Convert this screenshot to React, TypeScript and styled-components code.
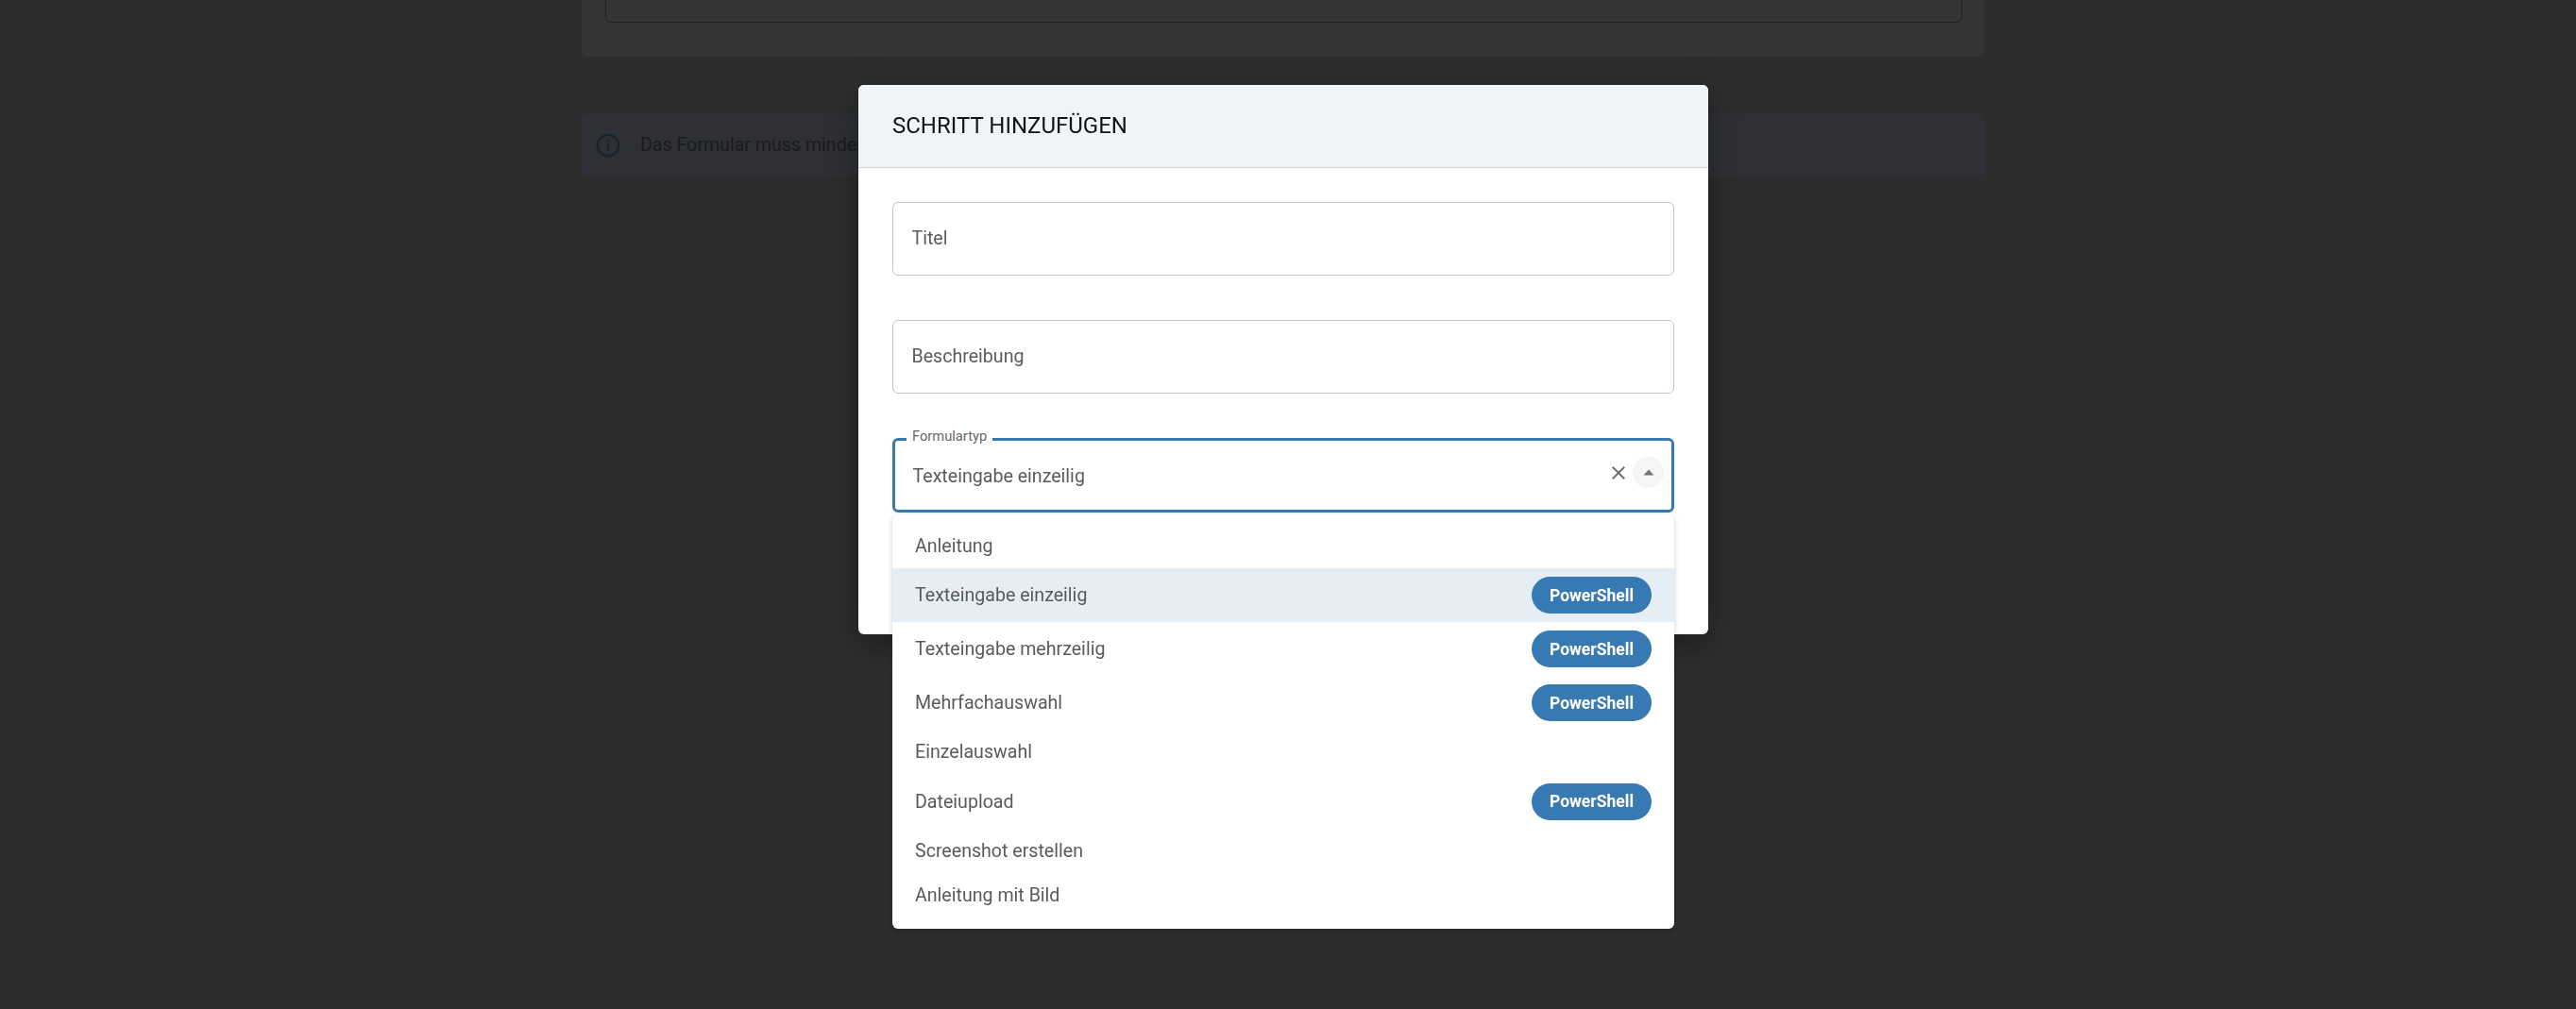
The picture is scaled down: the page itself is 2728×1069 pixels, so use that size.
import React from "react";
import styled, { createGlobalStyle } from "styled-components";

const Global = createGlobalStyle`
  html, body { margin: 0; padding: 0; height: 100%; background: #2d2d2d; overflow: hidden; }
  * { box-sizing: border-box; }
  body { font-family: Roboto, "Liberation Sans", sans-serif; }
`;

const Page = styled.div`
  width: 2728px;
  height: 1069px;
  padding: 0 626px 0 616px;
  background: #2d2d2d;
`;

const TopPanel = styled.div`
  height: 60px;
  padding: 0 24px 0 25px;
  background: #353535;
  border-radius: 0 0 6px 6px;
`;

const TopField = styled.div`
  height: 24px;
  border: 1.5px solid #232323;
  border-top: none;
  border-radius: 0 0 6px 6px;
`;

const Alert = styled.div`
  display: flex;
  align-items: center;
  gap: 19px;
  height: 66px;
  margin-top: 61px;
  padding: 0 13px;
  background: #2e3035;
  border-radius: 6px;
  color: #1a1b1d;
  font-size: 19.6px;
`;

const AlertText = styled.span`
  margin-top: -1px;
`;

const Backdrop = styled.div`
  position: fixed;
  inset: 0;
  display: flex;
  justify-content: center;
  align-items: flex-start;
  padding: 90px 10px 0 0;
`;

const Modal = styled.div`
  position: relative;
  width: 900px;
  height: 582px;
  background: #fff;
  border-radius: 6px;
  box-shadow: 0 14px 30px rgba(0, 0, 0, 0.22), 0 4px 40px rgba(0, 0, 0, 0.16);
`;

const Header = styled.header`
  display: flex;
  align-items: center;
  height: 88px;
  padding: 0 36px 2px;
  background: #eff4f8;
  border-bottom: 1.5px solid #cfd3d6;
  border-radius: 6px 6px 0 0;
  color: #10151a;
  font-size: 24px;
  font-weight: 400;
`;

const Body = styled.div`
  display: flex;
  flex-direction: column;
  gap: 47px;
  padding: 36px 36px 0;
`;

const Field = styled.div`
  display: flex;
  align-items: center;
  height: 78px;
  padding: 0 19.5px;
  padding-bottom: 2px;
  background: #fff;
  border: 1.5px solid #c4c4c4;
  border-radius: 6px;
  color: #5c5c5c;
  font-size: 19.6px;
`;

const SelectField = styled.div`
  position: relative;
  display: flex;
  align-items: center;
  height: 79px;
  padding: 1px 8px 0 18.5px;
  border: 3px solid #3778b3;
  border-radius: 6px;
  color: #5a5a5a;
  font-size: 19.6px;
`;

const FloatingLabel = styled.span`
  position: absolute;
  top: -15px;
  left: 12px;
  padding: 0 6px;
  height: 20px;
  line-height: 20px;
  background: #fff;
  color: #666;
  font-size: 14.7px;
`;

const SelectValue = styled.span`
  flex: 1;
`;

const ClearButton = styled.span`
  display: flex;
  justify-content: center;
  align-items: center;
  width: 26px;
  height: 26px;
  margin-top: -7px;
`;

const ArrowButton = styled.span`
  display: flex;
  justify-content: center;
  align-items: center;
  width: 33px;
  height: 33px;
  margin: -7px 0 0 2px;
  border-radius: 50%;
  background: #f5f5f5;
`;

const Dropdown = styled.ul`
  position: absolute;
  top: 455px;
  left: 36px;
  width: 828px;
  height: 439px;
  margin: 0;
  padding: 9.5px 0 11.5px;
  list-style: none;
  background: #fff;
  border-radius: 6px;
  box-shadow: 0 3px 6px rgba(0, 0, 0, 0.14), 0 1px 3px rgba(0, 0, 0, 0.1);
`;

const Option = styled.li<{ $badge: boolean; $active: boolean }>`
  display: flex;
  justify-content: space-between;
  align-items: center;
  height: ${(p) => (p.$badge ? "57px" : "47.5px")};
  padding: 0 24px;
  background: ${(p) => (p.$active ? "#e6eef5" : "transparent")};
  color: #5a5a5a;
  font-size: 19.6px;
`;

const Badge = styled.span`
  display: flex;
  justify-content: center;
  align-items: center;
  width: 127px;
  height: 39px;
  border-radius: 20px;
  background: #3779b3;
  color: #fff;
  font-size: 17.5px;
  font-weight: 700;
`;

const options = [
  { label: "Anleitung", badge: false },
  { label: "Texteingabe einzeilig", badge: true, active: true },
  { label: "Texteingabe mehrzeilig", badge: true },
  { label: "Mehrfachauswahl", badge: true },
  { label: "Einzelauswahl", badge: false },
  { label: "Dateiupload", badge: true },
  { label: "Screenshot erstellen", badge: false },
  { label: "Anleitung mit Bild", badge: false },
];

export default function App() {
  return (
    <>
      <Global />
      <Page>
        <TopPanel>
          <TopField />
        </TopPanel>
        <Alert>
          <svg width="30" height="30" viewBox="0 0 24 24" fill="#17242f">
            <path d="M11 7h2v2h-2zm0 4h2v6h-2zm1-9C6.48 2 2 6.48 2 12s4.48 10 10 10 10-4.48 10-10S17.52 2 12 2zm0 18c-4.41 0-8-3.59-8-8s3.59-8 8-8 8 3.59 8 8-3.59 8-8 8z" />
          </svg>
          <AlertText>Das Formular muss mindestens einen Schritt enthalten.</AlertText>
        </Alert>
      </Page>
      <Backdrop>
        <Modal>
          <Header>SCHRITT HINZUFÜGEN</Header>
          <Body>
            <Field>Titel</Field>
            <Field>Beschreibung</Field>
            <SelectField>
              <FloatingLabel>Formulartyp</FloatingLabel>
              <SelectValue>Texteingabe einzeilig</SelectValue>
              <ClearButton>
                <svg width="24" height="24" viewBox="0 0 24 24" fill="#707070">
                  <path d="M19 6.41 17.59 5 12 10.59 6.41 5 5 6.41 10.59 12 5 17.59 6.41 19 12 13.41 17.59 19 19 17.59 13.41 12z" />
                </svg>
              </ClearButton>
              <ArrowButton>
                <svg width="12" height="7" viewBox="0 0 12 7" fill="#757575">
                  <path d="M0.5 6.5 6 0.5 11.5 6.5z" />
                </svg>
              </ArrowButton>
            </SelectField>
          </Body>
          <Dropdown>
            {options.map((o) => (
              <Option key={o.label} $badge={o.badge} $active={!!o.active}>
                {o.label}
                {o.badge && <Badge>PowerShell</Badge>}
              </Option>
            ))}
          </Dropdown>
        </Modal>
      </Backdrop>
    </>
  );
}
